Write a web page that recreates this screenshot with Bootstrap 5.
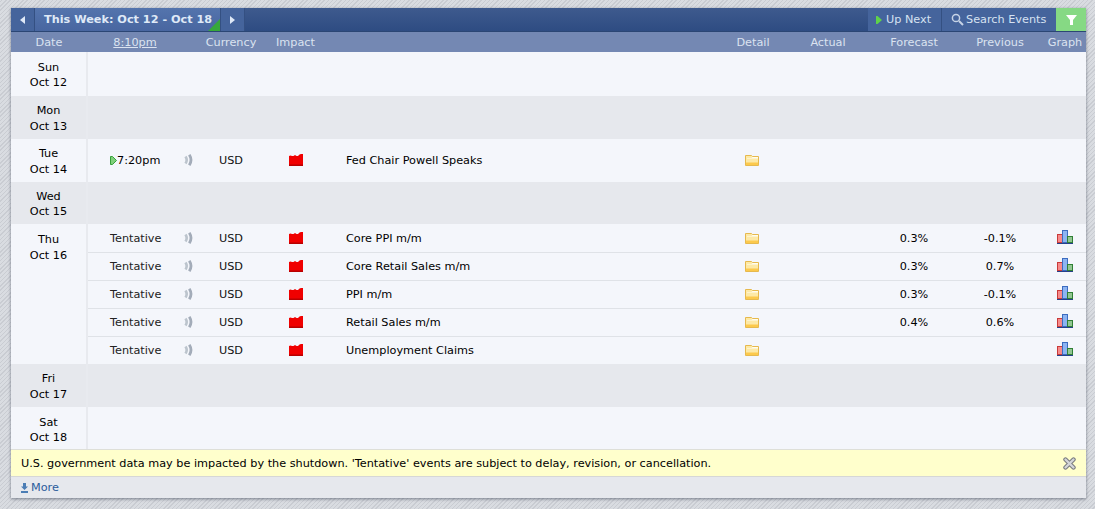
<!doctype html>
<html lang="en">
<head>
<meta charset="utf-8">
<title>Calendar</title>
<link href="https://cdn.jsdelivr.net/npm/bootstrap@5.3.0/dist/css/bootstrap.min.css" rel="stylesheet">
<style>
html,body{height:100%}
body{margin:0;padding:8px 9px 11px 11px;font:11.25px/16px "DejaVu Sans",Verdana,sans-serif;color:#000;
 background:#d3d6db repeating-linear-gradient(135deg,#d9dce1 0 1px,#c9ccd2 1px 2px,#d9dce1 2px 3px);}
.cal-wrap{width:1075px;height:490px;box-shadow:0 1px 3px rgba(40,50,70,.55);overflow:hidden;background:#f4f6fb}
.cal-top{height:24px;background:linear-gradient(#3e5a8e,#2e4c82);border-bottom:1px solid #2b4674;color:#dbe6f5;font-weight:700}
.cal-btn{height:23px;display:flex;align-items:center;background:#45649c;border-right:1px solid #345082;color:#d6e2f2;text-decoration:none;font-weight:400}
.cal-arrow{width:24px;justify-content:center}
.cal-week{width:186px;padding-left:9px;background:linear-gradient(#5474ad,#4866a0);font-weight:700;position:relative;color:#dfe9f7}
.cal-week::after{content:"";position:absolute;right:0;bottom:0;border-style:solid;border-width:0 0 12px 12px;border-color:transparent transparent #37a83a transparent}
.cal-next{width:74px;padding-left:8px;gap:4px}
.cal-search{width:114px;padding-left:9px;gap:2px;border-right:0}
.cal-filter{width:30px;height:23px;background:#86d984;display:flex;align-items:center;justify-content:center}
.cal-table{width:1075px;table-layout:fixed;border-collapse:collapse}
.cal-table th{height:20px;padding:1px 0 0;background:#7488b3;color:#dbe3f0;font-weight:400;text-align:center;white-space:nowrap}
.cal-table td{padding:0;text-align:center;white-space:nowrap;vertical-align:middle}
.cal-table tbody{background:#f4f6fb}
.day-grey td{background:#e6e8ed}
.cal-table td.day-cell{border-right:2px solid #e8eaef;line-height:15.5px;padding-top:2px}
.cal-table td.day-top{vertical-align:top;padding-top:8px}
.cal-table td.day-low{padding-top:4px}
.rowh{height:28px}
.rowh td:not(.day-cell){padding-top:1px}
.cal-table .rowh-first td:not(.day-cell){padding-top:2px}
.cal-table .line td:not(.day-cell){border-bottom:1px solid #dfe2e7}
.cal-table td.ev{text-align:left;padding-left:22px}
.cal-table td.tm{text-align:left;padding-left:22px;color:#222}
.cal-table td.tm-now{color:#000}
.time-hdr{text-decoration:underline}
.cur{color:#111}
.cal-note{height:28px;background:#ffffcc;border-top:1px solid #dedfd8;border-bottom:1px solid #d6d7d6;padding:1px 10px 0}
.cal-more{height:21px;background:#e6e8ed;padding:1px 0 0 10px;color:#2b5c9c;gap:3px}
.cal-more a{color:#2b5c9c;text-decoration:none}
svg{display:block;flex:none}
.ic{display:inline-block;vertical-align:middle}
.ic-snd{margin:0 1px 2px 0}
.ic-imp{margin-bottom:2px}
.ic-fold{margin-right:2px}
.ic-graph{margin-bottom:4px}
</style>
</head>
<body>
<div class="cal-wrap d-flex flex-column">
  <div class="cal-top d-flex">
    <a class="cal-btn cal-arrow" href="#"><svg width="5" height="8"><path d="M5 0v8L0 4z" fill="#dfe9f7"/></svg></a>
    <div class="cal-btn cal-week">This Week: Oct 12 - Oct 18</div>
    <a class="cal-btn cal-arrow" href="#"><svg width="5" height="8"><path d="M0 0v8l5-4z" fill="#dfe9f7"/></svg></a>
    <div class="ms-auto d-flex">
      <a class="cal-btn cal-next" href="#"><svg width="6" height="8"><path d="M0 0h1.500L6 4 1.500 8H0z" fill="#5fd24a"/></svg>Up Next</a>
      <a class="cal-btn cal-search" href="#"><svg width="13" height="13" viewBox="0 0 13 13"><circle cx="5" cy="5" r="3.600" fill="none" stroke="#c6d3e6" stroke-width="1.500"/><path d="M8 8l4 4" stroke="#c6d3e6" stroke-width="2"/></svg>Search Events</a>
      <a class="cal-filter" href="#"><svg width="11" height="10"><path d="M0 0h11L7 5v5H4V5z" fill="#fff"/></svg></a>
    </div>
  </div>
  <table class="cal-table">
    <colgroup><col style="width:76px"><col style="width:96px"><col style="width:12px"><col style="width:72px"><col style="width:57px"><col style="width:398px"><col style="width:62px"><col style="width:88px"><col style="width:84px"><col style="width:88px"><col style="width:42px"></colgroup>
    <thead><tr><th>Date</th><th><span class="time-hdr">8:10pm</span></th><th></th><th>Currency</th><th>Impact</th><th></th><th>Detail</th><th>Actual</th><th>Forecast</th><th>Previous</th><th>Graph</th></tr></thead>
    <tbody id="rows"></tbody>
  </table>
  <div class="cal-note d-flex align-items-center justify-content-between">
    <span>U.S. government data may be impacted by the shutdown. 'Tentative' events are subject to delay, revision, or cancellation.</span>
    <svg width="13" height="13" viewBox="0 0 13 13"><path d="M2.500 2.500l8 8M10.500 2.500l-8 8" stroke="#77797d" stroke-width="4.400" stroke-linecap="round"/><path d="M2.500 2.500l8 8M10.500 2.500l-8 8" stroke="#d4d6da" stroke-width="2.400" stroke-linecap="round"/></svg>
  </div>
  <div class="cal-more d-flex align-items-center">
    <svg width="7" height="10"><path d="M2 0h3v3.500h2L3.500 7 0 3.500h2zM0 8h7v2H0z" fill="#4b7db5"/></svg><a href="#">More</a>
  </div>
</div>
<script>
const snd='<svg class="ic ic-snd" width="9" height="12" viewBox="0 0 9 12"><path d="M1.500 2.500q2.400 3.500 0 7" fill="none" stroke="#bcc4cd" stroke-width="2.600"/><path d="M5.300.8q3.400 5.200 0 10.400" fill="none" stroke="#a3acb9" stroke-width="2.800"/></svg>';
const imp='<svg class="ic ic-imp" width="14" height="12" viewBox="0 0 14 12"><path d="M0 12V2l1.500-.5L3 2h1.500L6 1l1.500 1H9l1.500-1.500L12 0h2v12z" fill="#f00000"/><path d="M0 10.500h14V12H0z" fill="#b80000"/></svg>';
const fold='<svg class="ic ic-fold" width="14" height="11" viewBox="0 0 14 11"><path d="M.5 10.500V.5h6l1 1h6v9z" fill="#fde9a6" stroke="#e6b94e"/><path d="M2 3h4.500l1-1H13v1.500H2z" fill="#fffdf0"/><path d="M1 7.500h12V10H1z" fill="#fcc94c"/></svg>';
const gr='<svg class="ic ic-graph" width="16" height="14" viewBox="0 0 16 14"><rect x=".5" y="4.500" width="5" height="8" fill="#f78a8a" stroke="#c83a3a"/><rect x="5.500" y=".5" width="5" height="12" fill="#8db4f2" stroke="#3c6cc0"/><rect x="10.500" y="6.500" width="5" height="6" fill="#92c692" stroke="#2f7f35"/><path d="M0 13h16v1H0z" fill="#27408a"/></svg>';
const arrow='<svg class="ic" width="7" height="9" viewBox="0 0 7 9"><path d="M.5.5h2l4 4-4 4h-2z" fill="#7fd07a" stroke="#35a03a"/></svg>';
function ev(time,name,f,p,g,last,now){return `<td class="tm ${now?'tm-now':''}">${now?arrow:''}${time}</td><td>${snd}</td><td class="cur">USD</td><td>${imp}</td><td class="ev">${name}</td><td>${fold}</td><td></td><td>${f}</td><td>${p}</td><td>${g?gr:''}</td>`}
const empty=(d,m,h,cls,dc='')=>`<tr class="${cls}" style="height:${h}px"><td class="day-cell ${dc}">${d}<br>${m}</td><td colspan="10"></td></tr>`;
const thu=[["Core PPI m/m","0.3%","-0.1%",1],["Core Retail Sales m/m","0.3%","0.7%",1],["PPI m/m","0.3%","-0.1%",1],["Retail Sales m/m","0.4%","0.6%",1],["Unemployment Claims","","",1]];
let h=empty('Sun','Oct 12',44,'')+empty('Mon','Oct 13',43,'day-grey');
h+=`<tr style="height:43px"><td class="day-cell">Tue<br>Oct 14</td>${ev('7:20pm','Fed Chair Powell Speaks','','',0,0,1)}</tr>`;
h+=empty('Wed','Oct 15',42,'day-grey');
thu.forEach((r,i)=>{h+=`<tr class="rowh ${i==0?'rowh-first':''} ${i<4?'line':''}">${i==0?'<td class="day-cell day-top" rowspan="5">Thu<br>Oct 16</td>':''}${ev('Tentative',r[0],r[1],r[2],r[3])}</tr>`});
h+=empty('Fri','Oct 17',43,'day-grey')+empty('Sat','Oct 18',42,'','day-low');
document.getElementById('rows').innerHTML=h;
</script>
<script src="https://cdn.jsdelivr.net/npm/bootstrap@5.3.0/dist/js/bootstrap.bundle.min.js"></script>
</body>
</html>
